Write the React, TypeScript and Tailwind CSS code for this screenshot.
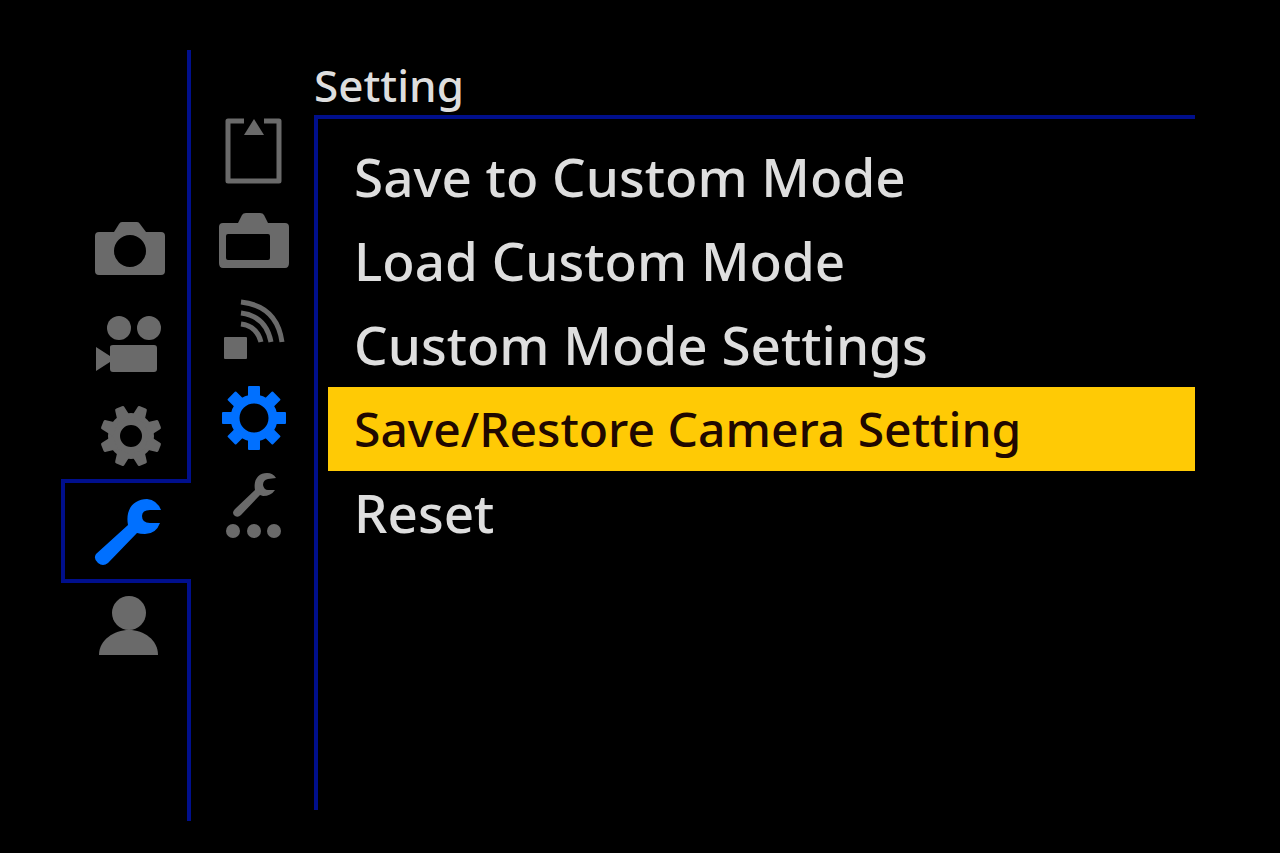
import type { ReactNode } from "react";
import clsx from "clsx";

const teeth = [0, 45, 90, 135, 180, 225, 270, 315];

function CameraIcon() {
  return (
    <svg viewBox="0 0 80 80" className="size-20" fill="currentColor">
      <path
        fillRule="evenodd"
        d="M9 23h15l5-8q1-2 3-2h15q2 0 3 2l6 8h15q4 0 4 4v35q0 4-4 4H9q-4 0-4-4V27q0-4 4-4ZM40 26a16 16 0 1 0 0 32a16 16 0 1 0 0-32Z"
      />
    </svg>
  );
}

function MovieIcon() {
  return (
    <svg viewBox="0 0 80 80" className="size-20" fill="currentColor">
      <circle cx="29" cy="27" r="12" />
      <circle cx="59" cy="27" r="12" />
      <path d="M6 46l14 9V46q0-2 3-2h41q3 0 3 3v21q0 3-3 3H23q-3 0-3-3V61L6 70Z" />
    </svg>
  );
}

function CustomIcon() {
  return (
    <svg viewBox="0 0 80 80" className="size-20" fill="currentColor">
      <circle cx="41" cy="43" r="17" fill="none" stroke="currentColor" strokeWidth="12" />
      {teeth.map((a) => (
        <path
          key={a}
          transform={`rotate(${a + 22.5} 41 43)`}
          d="M34 26l2-12q0-2 2-2h6q2 0 2 2l2 12Z"
        />
      ))}
    </svg>
  );
}

function SetupIcon() {
  return (
    <svg viewBox="0 0 80 80" className="size-20" fill="currentColor">
      <path d="M6 63L38 34C35 18 44 8 57 8Q67 9 71 19H60Q52 19 52 25Q52 32 60 32H70Q66 43 55 43Q50 43 47 42L18 72Q13 76 8 72Q3 68 6 63Z" />
    </svg>
  );
}

function MyMenuIcon() {
  return (
    <svg viewBox="0 0 80 80" className="size-20" fill="currentColor">
      <circle cx="39" cy="24" r="17" />
      <path d="M9 66C9 51 24 41 39 41S68 51 68 66Z" />
    </svg>
  );
}

function CardIcon() {
  return (
    <svg viewBox="0 0 80 80" className="size-20" fill="currentColor">
      <path
        d="M31 9H15V69H66V9H51"
        fill="none"
        stroke="currentColor"
        strokeWidth="5"
        strokeLinejoin="round"
      />
      <path d="M41 7L51 23H31Z" />
    </svg>
  );
}

function MonitorIcon() {
  return (
    <svg viewBox="0 0 80 80" className="size-20" fill="currentColor">
      <path
        fillRule="evenodd"
        d="M10 22h15l4-8q1-2 4-2h14q3 0 4 2l4 8h17q4 0 4 4v36q0 5-4 5H10q-4 0-4-5V26q0-4 4-4ZM15 33q-2 0-2 2v22q0 2 2 2h40q2 0 2-2V35q0-2-2-2Z"
      />
    </svg>
  );
}

function InOutIcon() {
  return (
    <svg viewBox="0 0 80 80" className="size-20" fill="currentColor">
      <rect x="11" y="47" width="23" height="22" rx="1" />
      <g fill="none" stroke="currentColor" strokeWidth="5">
        <path d="M28 34Q44 36 48 52" />
        <path d="M28 23Q53 26 58 52" />
        <path d="M28 12Q64 16 69 52" />
      </g>
    </svg>
  );
}

function SettingIcon() {
  return (
    <svg viewBox="0 0 80 80" className="size-20" fill="currentColor">
      <circle cx="41" cy="39" r="19" fill="none" stroke="currentColor" strokeWidth="9" />
      {teeth.map((a) => (
        <rect
          key={a}
          x="35"
          y="7"
          width="12"
          height="13"
          rx="1"
          transform={`rotate(${a} 41 39)`}
        />
      ))}
    </svg>
  );
}

function OthersIcon() {
  return (
    <svg viewBox="0 0 80 80" className="size-20" fill="currentColor">
      <path d="M22 41L42 22C40 11 46 5 54 5Q60 5 63 10L55 11Q50 12 50 17Q51 22 55 22L62 22Q58 28 50 28L47 27L28 47Q25 50 22 48Q18 45 22 41Z" />
      <circle cx="20" cy="63" r="7" />
      <circle cx="41" cy="63" r="7" />
      <circle cx="61" cy="63" r="7" />
    </svg>
  );
}

type Tab = { label: string; icon: ReactNode };

const mainTabs: Tab[] = [
  { label: "Photo", icon: <CameraIcon /> },
  { label: "Video", icon: <MovieIcon /> },
  { label: "Custom", icon: <CustomIcon /> },
  { label: "Setup", icon: <SetupIcon /> },
  { label: "My Menu", icon: <MyMenuIcon /> },
];

const subTabs: Tab[] = [
  { label: "Card/File", icon: <CardIcon /> },
  { label: "Monitor/Display", icon: <MonitorIcon /> },
  { label: "IN/OUT", icon: <InOutIcon /> },
  { label: "Setting", icon: <SettingIcon /> },
  { label: "Others", icon: <OthersIcon /> },
];

const items = [
  "Save to Custom Mode",
  "Load Custom Mode",
  "Custom Mode Settings",
  "Save/Restore Camera Setting",
  "Reset",
];

export default function App() {
  return (
    <div className="flex min-h-screen bg-black pr-[85px] pl-[61px] font-['Noto_Sans',sans-serif] font-medium text-[#dedede]">
      <nav aria-label="Main menu" className="flex w-[130px] shrink-0 flex-col pt-[50px] pb-8">
        <div className="h-[153px] border-r-4 border-[#000f8c]" />
        {mainTabs.map((t) => (
          <button
            key={t.label}
            aria-label={t.label}
            className={clsx(
              "flex items-center justify-center border-[#000f8c]",
              t.label === "Setup"
                ? "h-[104px] border-y-4 border-l-4 pl-1 text-[#0070ff]"
                : "h-[92px] border-r-4 pl-3 text-[#6a6a6a]",
            )}
          >
            {t.icon}
          </button>
        ))}
        <div className="flex-1 border-r-4 border-[#000f8c]" />
      </nav>

      <nav aria-label="Setup pages" className="flex w-[123px] shrink-0 flex-col pt-[107px]">
        {subTabs.map((t) => (
          <button
            key={t.label}
            aria-label={t.label}
            className={clsx(
              "flex h-[89px] items-center justify-center",
              t.label === "Setting" ? "text-[#0070ff]" : "text-[#6a6a6a]",
            )}
          >
            {t.icon}
          </button>
        ))}
      </nav>

      <main className="flex min-w-0 flex-1 flex-col pt-[55px] pb-[43px]">
        <h1 className="h-[60px] text-[44px] leading-[60px]">Setting</h1>
        <div className="flex-1 border-t-4 border-l-4 border-[#000f8c] pt-4 pl-[10px]">
          <ul>
            {items.map((item) => (
              <li key={item}>
                <button
                  className={clsx(
                    "h-[84px] w-full pl-[26px] text-left whitespace-nowrap",
                    item === "Save/Restore Camera Setting"
                      ? "bg-[#ffca05] text-[48px] text-[#200800]"
                      : "text-[53px]",
                  )}
                >
                  {item}
                </button>
              </li>
            ))}
          </ul>
        </div>
      </main>
    </div>
  );
}
